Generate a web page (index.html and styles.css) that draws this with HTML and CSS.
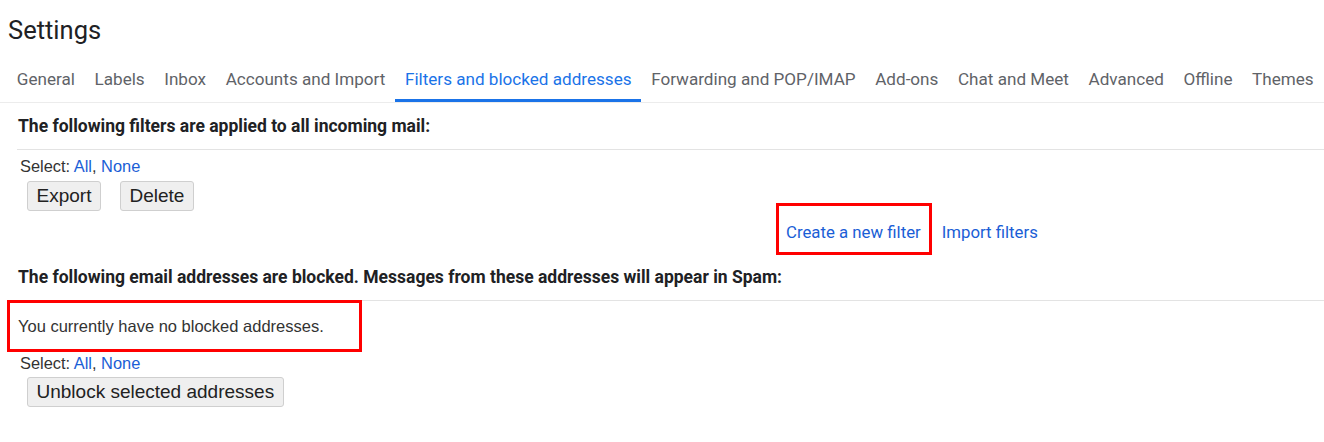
FILE: index.html
```html
<!DOCTYPE html>
<html>
<head>
<meta charset="utf-8">
<link rel="stylesheet" href="styles.css">
</head>
<body>
<div class="title">Settings</div>
<nav class="tabs">
  <span class="tab">General</span>
  <span class="tab">Labels</span>
  <span class="tab">Inbox</span>
  <span class="tab">Accounts and Import</span>
  <span class="tab active">Filters and blocked addresses</span>
  <span class="tab">Forwarding and POP/IMAP</span>
  <span class="tab">Add-ons</span>
  <span class="tab">Chat and Meet</span>
  <span class="tab">Advanced</span>
  <span class="tab">Offline</span>
  <span class="tab">Themes</span>
</nav>
<section class="sec sec-filters">
  <div class="sec-head">The following filters are applied to all incoming mail:</div>
  <div class="select">Select: <a class="link">All</a>, <a class="link">None</a></div>
  <div class="btns">
    <button class="btn">Export</button>
    <button class="btn">Delete</button>
  </div>
  <div class="actions">
    <span class="mark-box"><a class="link2">Create a new filter</a></span>
    <a class="link2">Import filters</a>
  </div>
</section>
<section class="sec sec-blocked">
  <div class="sec-head">The following email addresses are blocked. Messages from these addresses will appear in Spam:</div>
  <div class="empty">You currently have no blocked addresses.<span class="mark-over"></span></div>
  <div class="select">Select: <a class="link">All</a>, <a class="link">None</a></div>
  <div class="btns">
    <button class="btn">Unblock selected addresses</button>
  </div>
</section>
</body>
</html>
```
FILE: styles.css
```css
body {
  margin: 0;
  background: #fff;
  color: #202124;
  font-family: Roboto, "Liberation Sans", Arial, sans-serif;
}
.title {
  padding: 14px 0 0 8px;
  font-size: 25.5px;
  line-height: 32px;
  height: 30px;
  color: #202124;
}
.tabs {
  display: flex;
  padding-left: 7px;
  border-bottom: 1px solid #ececec;
}
.tab {
  padding: 25px 9.8px 10px;
  font-size: 17.1px;
  line-height: 20px;
  color: #5f6368;
  border-bottom: 3px solid transparent;
  white-space: nowrap;
}
.tab.active {
  color: #1a73e8;
  border-bottom-color: #1a73e8;
}
.sec {
  margin-left: 17px;
}
.sec-head {
  font-weight: bold;
  font-size: 17.5px;
  line-height: 20px;
  padding: 13px 0 13px 1px;
  border-bottom: 1px solid #e3e3e3;
  color: #202124;
}
.select {
  font-family: "Liberation Sans", Arial, sans-serif;
  font-size: 16.4px;
  line-height: 18px;
  padding: 7px 0 0 3px;
  color: #333;
}
.link {
  color: #1a5ed6;
}
.btns {
  display: flex;
  gap: 19px;
  padding: 6px 0 0 10px;
}
.btn {
  font-family: "Liberation Sans", Arial, sans-serif;
  font-size: 19px;
  line-height: 20px;
  height: 30px;
  padding: 0 8.5px;
  background: #efefef;
  border: 1px solid #cfcfcf;
  border-radius: 3px;
  color: #222;
}
.actions {
  display: flex;
  justify-content: flex-start;
  align-items: baseline;
  gap: 10px;
  padding-left: 759px;
  margin-top: -8px;
}
.mark-box {
  display: inline-block;
  border: 3px solid #f00;
  padding: 17px 8px 10px 7px;
}
.link2 {
  font-size: 16.8px;
  line-height: 19px;
  color: #1a5ed6;
}
.sec-blocked .sec-head {
  padding-top: 12px;
}
.empty {
  position: relative;
  font-family: "Liberation Sans", Arial, sans-serif;
  font-size: 16.5px;
  line-height: 20px;
  padding: 15px 0 0 1px;
  color: #333;
}
.mark-over {
  position: absolute;
  left: -10px;
  top: -1px;
  width: 349px;
  height: 46px;
  border: 3px solid #f00;
}
.sec-blocked .select {
  padding-top: 18px;
}
.sec-blocked .btns {
  padding-top: 5px;
}
```
